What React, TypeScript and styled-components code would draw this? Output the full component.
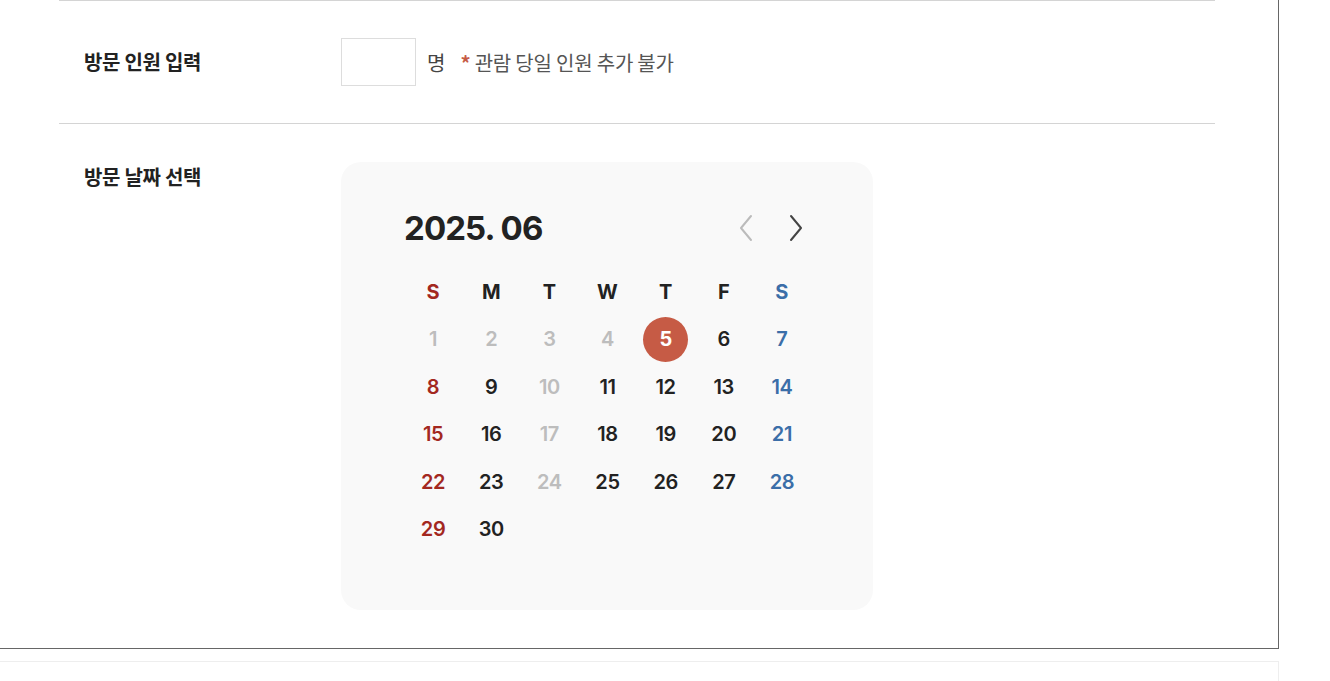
import { FunctionComponent } from "react";
import styled, { createGlobalStyle, css } from "styled-components";

type Tone = "sun" | "sat" | "muted" | "plain" | "selected";

const GlobalStyle = createGlobalStyle`
  html, body {
    margin: 0;
    padding: 0;
    background: #fff;
    overflow: hidden;
  }
  body {
    font-family: "Noto Sans CJK KR", "Noto Sans", sans-serif;
    color: #222;
  }
`;

const WEEKDAYS: { label: string; tone: Tone }[] = [
  { label: "S", tone: "sun" },
  { label: "M", tone: "plain" },
  { label: "T", tone: "plain" },
  { label: "W", tone: "plain" },
  { label: "T", tone: "plain" },
  { label: "F", tone: "plain" },
  { label: "S", tone: "sat" },
];

// June 2025 starts on a Sunday; days before the 5th and a few Tuesdays are closed
const CLOSED = [1, 2, 3, 4, 10, 17, 24];
const SELECTED = 5;

const toneFor = (day: number, col: number): Tone => {
  if (day === SELECTED) return "selected";
  if (CLOSED.includes(day)) return "muted";
  if (col === 0) return "sun";
  if (col === 6) return "sat";
  return "plain";
};

const Chevron: FunctionComponent<{ dir: "left" | "right"; color: string }> = ({
  dir,
  color,
}) => (
  <svg width="16" height="28" viewBox="0 0 16 28" fill="none">
    <path
      d={dir === "left" ? "M13 2 L3 14 L13 26" : "M3 2 L13 14 L3 26"}
      stroke={color}
      strokeWidth="2"
      strokeLinecap="round"
      strokeLinejoin="round"
    />
  </svg>
);

const Calendar: FunctionComponent = () => {
  const days = Array.from({ length: 30 }, (_, i) => i + 1);
  return (
    <CalendarBox>
      <CalendarHead>
        <MonthTitle>2025. 06</MonthTitle>
        <NavGroup>
          <NavButton aria-label="이전 달">
            <Chevron dir="left" color="#bbb" />
          </NavButton>
          <NavButton aria-label="다음 달">
            <Chevron dir="right" color="#444" />
          </NavButton>
        </NavGroup>
      </CalendarHead>
      <DayGrid>
        {WEEKDAYS.map((w, i) => (
          <WeekdayCell key={i} tone={w.tone}>
            {w.label}
          </WeekdayCell>
        ))}
        {days.map((d, i) => {
          const tone = toneFor(d, i % 7);
          return (
            <DayCell key={d}>
              <DayNumber tone={tone}>{d}</DayNumber>
            </DayCell>
          );
        })}
      </DayGrid>
    </CalendarBox>
  );
};

export default function App() {
  return (
    <>
      <GlobalStyle />
      <Panel>
        <FormRow>
          <RowLabel centered>방문 인원 입력</RowLabel>
          <InlineField>
            <CountInput type="text" aria-label="방문 인원" />
            <Unit>명</Unit>
            <Notice>
              <Star>*</Star> 관람 당일 인원 추가 불가
            </Notice>
          </InlineField>
        </FormRow>
        <FormRow last>
          <RowLabel>방문 날짜 선택</RowLabel>
          <div>
            <Calendar />
          </div>
        </FormRow>
      </Panel>
      <NextPanel />
    </>
  );
}

const Panel = styled.div`
  width: 1279px;
  box-sizing: border-box;
  padding: 0 63px 0 59px;
  border-right: 1px solid #666;
  border-bottom: 1px solid #666;
`;

const FormRow = styled.div<{ last?: boolean }>`
  display: grid;
  grid-template-columns: 257px 1fr;
  padding: ${({ last }) => (last ? "38px 25px 38px" : "37px 25px")};
  border-top: 1px solid #d4d4d4;
`;

const RowLabel = styled.div<{ centered?: boolean }>`
  font-size: 20px;
  font-weight: 700;
  line-height: 30px;
  color: #222;
  letter-spacing: -0.3px;
  ${({ centered }) =>
    centered &&
    css`
      align-self: center;
    `}
`;

const InlineField = styled.div`
  display: flex;
  align-items: center;
`;

const CountInput = styled.input`
  width: 75px;
  height: 48px;
  box-sizing: border-box;
  border: 1px solid #ddd;
  border-radius: 0;
  background: #fff;
  outline: none;
  padding: 0 8px;
  font-size: 18px;
`;

const Unit = styled.span`
  margin-left: 11px;
  font-size: 20px;
  color: #444;
`;

const Notice = styled.span`
  margin-left: 15px;
  font-size: 20px;
  letter-spacing: -0.2px;
  color: #555;
`;

const Star = styled.span`
  color: #c65b45;
  font-weight: 700;
`;

const CalendarBox = styled.div`
  width: 532px;
  box-sizing: border-box;
  padding: 46px 62px 57px 63px;
  background: #f9f9f9;
  border-radius: 20px;
  font-family: Inter, "Noto Sans", sans-serif;
`;

const CalendarHead = styled.div`
  display: flex;
  align-items: center;
  justify-content: space-between;
  height: 40px;
  margin-bottom: 20px;
`;

const MonthTitle = styled.h2`
  margin: 0;
  font-size: 33px;
  font-weight: 700;
  letter-spacing: -0.9px;
  color: #222;
`;

const NavGroup = styled.div`
  display: flex;
  align-items: center;
  gap: 34px;
  margin-right: 7px;
`;

const NavButton = styled.button`
  display: flex;
  align-items: center;
  justify-content: center;
  width: 16px;
  height: 28px;
  padding: 0;
  border: 0;
  background: none;
  cursor: pointer;
`;

const toneColor: Record<Tone, string> = {
  sun: "#a3281f",
  sat: "#3b6ea8",
  muted: "#bdbdbd",
  plain: "#222",
  selected: "#fff",
};

const DayGrid = styled.div`
  display: grid;
  grid-template-columns: repeat(7, 1fr);
  grid-auto-rows: 47.5px;
`;

const WeekdayCell = styled.div<{ tone: Tone }>`
  display: flex;
  align-items: center;
  justify-content: center;
  font-size: 20px;
  font-weight: 700;
  color: ${({ tone }) => toneColor[tone]};
`;

const DayCell = styled.div`
  display: flex;
  align-items: center;
  justify-content: center;
`;

const DayNumber = styled.span<{ tone: Tone }>`
  display: flex;
  align-items: center;
  justify-content: center;
  width: 45px;
  height: 45px;
  border-radius: 50%;
  font-size: 20px;
  font-weight: 600;
  letter-spacing: -0.4px;
  color: ${({ tone }) => toneColor[tone]};
  ${({ tone }) =>
    tone === "selected" &&
    css`
      background: #c65b45;
      font-weight: 700;
    `}
`;

const NextPanel = styled.div`
  width: 1279px;
  height: 30px;
  margin-top: 12px;
  box-sizing: border-box;
  border-top: 1px solid #eee;
  border-right: 1px solid #eee;
`;
